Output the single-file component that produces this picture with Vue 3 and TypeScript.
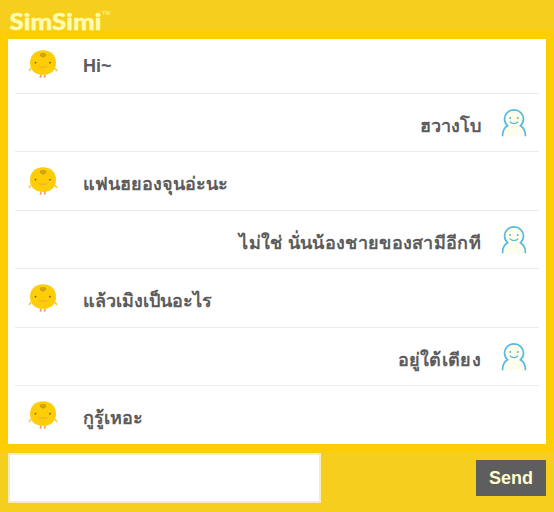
<script setup lang="ts">
import { ref } from 'vue'

interface Message {
  from: 'bot' | 'me'
  text: string
  spacing: string
}

const draft = ref('')
const messages: Message[] = [
  { from: 'bot', text: 'Hi~', spacing: 'normal' },
  { from: 'me', text: 'ฮวางโบ', spacing: 'normal' },
  { from: 'bot', text: 'แฟนฮยองจุนอ่ะนะ', spacing: 'normal' },
  { from: 'me', text: 'ไม่ใช่ นั่นน้องชายของสามีอีกที', spacing: 'wide' },
  { from: 'bot', text: 'แล้วเมิงเป็นอะไร', spacing: 'normal' },
  { from: 'me', text: 'อยู่ใต้เตียง', spacing: 'wide' },
  { from: 'bot', text: 'กูรู้เหอะ', spacing: 'normal' },
]
</script>

<template>
  <div class="app">
    <header class="header">
      <svg class="logo" width="120" height="38" viewBox="0 0 120 38">
        <text class="logo-name" x="9.5" y="29.5" textLength="92" lengthAdjust="spacingAndGlyphs">SimSimi</text>
        <text class="logo-tm" x="102" y="14.5" textLength="8" lengthAdjust="spacingAndGlyphs">TM</text>
      </svg>
    </header>
    <main class="chat">
      <div v-for="(m, i) in messages" :key="i" class="row" :class="m.from">
        <svg v-if="m.from === 'bot'" class="avatar" width="30" height="30" viewBox="0 -0.7 30 30">
          <path d="M3 18.5 Q2 20.5 .8 21 M27 18.5 Q28 20.5 29.2 21" fill="none" stroke="#f7c63a" stroke-width="1.7" />
          <path d="M12.9 24.5v2.5l-1.3.5M17 24.5v2.5l-1.3.5" fill="none" stroke="#f0924a" stroke-width="1.3" />
          <path d="M15 .5C22.8 .5 28 5.5 28 13 28 20.5 22.8 25.2 15 25.2S2 20.5 2 13C2 5.5 7.2 .5 15 .5Z" fill="#fdcd08" />
          <path d="M12.2 5.2Q12.5 3.4 14.5 4 17 3.3 18 5 17.4 7.4 15 7.4 12.7 7.2 12.2 5.2M14 5.5h2.5" fill="#e3b011" stroke="#b98f16" stroke-width=".8" />
          <circle cx="7.5" cy="13" r=".9" fill="#75601d" />
          <circle cx="22" cy="13" r=".9" fill="#75601d" />
          <path d="M10.5 17Q15 18.4 19 17" fill="none" stroke="#f3a838" stroke-width="1" />
        </svg>
        <span class="text" :class="m.spacing">{{ m.text }}</span>
        <svg v-if="m.from === 'me'" class="avatar" width="26" height="28" viewBox="0 0 26 28">
          <path d="M1.6 27.3C1.4 22.5 3.2 18.8 6.6 16.8 4.6 15 3.5 12.6 3.5 10 3.5 4.9 7.6 .9 13 .9S22.5 4.9 22.5 10C22.5 12.6 21.4 15 19.4 16.8 22.8 18.8 24.6 22.5 24.4 27.3" fill="#fffdec" stroke="#55b9e0" stroke-width="1.7" />
          <circle cx="9.2" cy="9" r=".9" fill="#4bb1d0" />
          <circle cx="16.8" cy="9" r=".9" fill="#4bb1d0" />
          <path d="M8.7 12.6Q13 16.6 17.3 12.6" fill="none" stroke="#55bad6" stroke-width="1.2" />
        </svg>
      </div>
    </main>
    <footer class="composer">
      <input v-model="draft" class="input" type="text" />
      <button class="send" type="button">Send</button>
    </footer>
  </div>
</template>

<style>
body {
  margin: 0;
}
</style>

<style scoped>
.app {
  box-sizing: border-box;
  width: 554px;
  height: 512px;
  overflow: hidden;
  background: #ffce02;
  font-family: 'Liberation Sans', 'Noto Sans', sans-serif;
}
.header {
  height: 30px;
  margin-bottom: 9px;
  background: #f6cf1e;
}
.logo {
  display: block;
}
.logo-name {
  font: 900 23px Lato, sans-serif;
  fill: #fffbb0;
  stroke: #fffbb0;
  stroke-width: 0.4px;
  stroke-linejoin: round;
}
.logo-tm {
  font: 400 6px 'Liberation Sans', sans-serif;
  fill: #fffbb0;
}
.chat {
  box-sizing: border-box;
  height: 405px;
  margin: 0 8px 8px;
  padding: 0 7px;
  overflow: hidden;
  background: #fff;
}
.row {
  box-sizing: border-box;
  display: flex;
  align-items: flex-start;
  height: 58.4px;
  padding: 14px 12px 0 13px;
  border-bottom: 1px solid #ebebeb;
}
.row:first-child {
  height: 55.1px;
  padding-top: 10px;
}
.row:last-child {
  border-bottom: 0;
}
.me {
  justify-content: flex-end;
  padding-top: 15px;
}
.avatar {
  flex: none;
}
.text {
  color: #5c5c5c;
  font-size: 18px;
  font-weight: 700;
  line-height: 34px;
  white-space: nowrap;
}
.bot .text {
  margin-left: 25px;
  line-height: 36px;
}
.bot:first-child .text {
  line-height: 34px;
}
.me .text {
  margin-right: 20px;
}
.text.wide {
  letter-spacing: 0.3px;
}
.composer {
  box-sizing: border-box;
  display: flex;
  justify-content: space-between;
  align-items: flex-start;
  height: 60px;
  padding: 1px 8px 0;
  background: #f6cf1e;
}
.input {
  box-sizing: border-box;
  width: 313px;
  height: 50px;
  padding: 4px 8px;
  border: 2px solid #f6edc4;
  outline: 0;
  background: #fff;
  font-size: 18px;
}
.send {
  width: 70px;
  height: 36px;
  margin-top: 7px;
  padding: 0;
  border: 0;
  background: #5e5e5e;
  color: #fffbcf;
  font: 700 18px 'Liberation Sans', sans-serif;
}
</style>
